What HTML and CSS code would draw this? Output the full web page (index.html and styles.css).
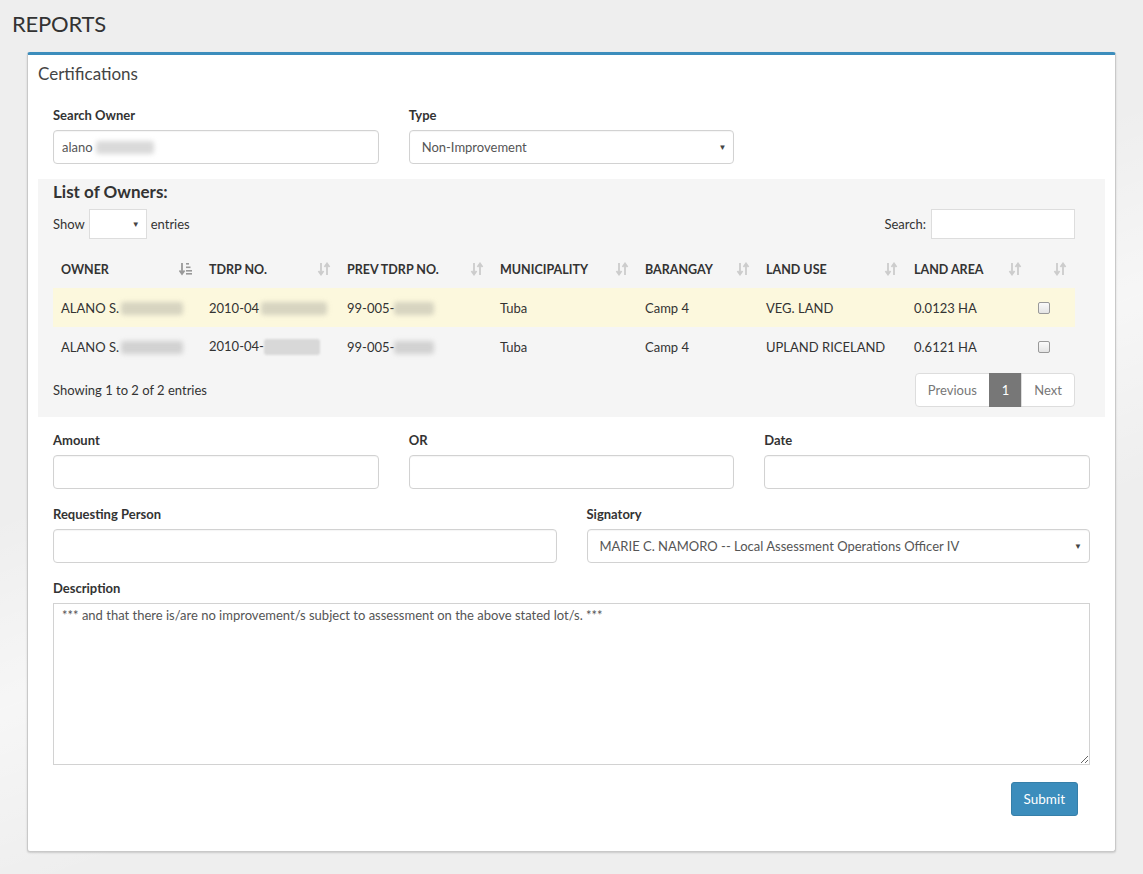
FILE: index.html
```html
<!DOCTYPE html>
<html>
<head>
<meta charset="utf-8">
<link rel="stylesheet" href="styles.css">
</head>
<body>
<div class="page">
  <h1 class="page-title">REPORTS</h1>
  <div class="box">
    <div class="box-header"><h3 class="box-title">Certifications</h3></div>
    <div class="box-body">
      <div class="row row-3">
        <div class="form-group">
          <label class="lbl">Search Owner</label>
          <div class="input input-text">alano <span class="blur blur-w58"></span></div>
        </div>
        <div class="form-group">
          <label class="lbl">Type</label>
          <div class="input select">Non-Improvement<span class="caret">▼</span></div>
        </div>
      </div>

      <div class="panel">
        <h4 class="panel-title">List of Owners:</h4>
        <div class="dt-top">
          <div class="dt-length">Show <span class="len-select"><span class="caret small">▼</span></span> entries</div>
          <div class="dt-search">Search: <span class="search-input"></span></div>
        </div>
        <table class="dt">
          <colgroup>
            <col style="width:148px"><col style="width:138px"><col style="width:153px"><col style="width:145px"><col style="width:121px"><col style="width:148px"><col style="width:124px"><col style="width:45px">
          </colgroup>
          <thead>
            <tr>
              <th>OWNER<svg class="sort active" viewBox="0 0 14 14" width="14" height="14"><path d="M3 1v10M0.5 8.5L3 12l2.5-3.5" stroke="#999" stroke-width="1.8" fill="none"/><rect x="7" y="1" width="3" height="1.6" fill="#999"/><rect x="7" y="4.5" width="4.5" height="1.6" fill="#999"/><rect x="7" y="8" width="6" height="1.6" fill="#999"/><rect x="7" y="11" width="6" height="1.6" fill="#999"/></svg></th>
              <th>TDRP NO.<svg class="sort" viewBox="0 0 14 14" width="14" height="14"><path d="M4 1v11M1.5 9L4 12.5 6.5 9M10 13V2M7.5 5L10 1.5 12.5 5" stroke="#ccc" stroke-width="1.8" fill="none"/></svg></th>
              <th>PREV TDRP NO.<svg class="sort" viewBox="0 0 14 14" width="14" height="14"><path d="M4 1v11M1.5 9L4 12.5 6.5 9M10 13V2M7.5 5L10 1.5 12.5 5" stroke="#ccc" stroke-width="1.8" fill="none"/></svg></th>
              <th>MUNICIPALITY<svg class="sort" viewBox="0 0 14 14" width="14" height="14"><path d="M4 1v11M1.5 9L4 12.5 6.5 9M10 13V2M7.5 5L10 1.5 12.5 5" stroke="#ccc" stroke-width="1.8" fill="none"/></svg></th>
              <th>BARANGAY<svg class="sort" viewBox="0 0 14 14" width="14" height="14"><path d="M4 1v11M1.5 9L4 12.5 6.5 9M10 13V2M7.5 5L10 1.5 12.5 5" stroke="#ccc" stroke-width="1.8" fill="none"/></svg></th>
              <th>LAND USE<svg class="sort" viewBox="0 0 14 14" width="14" height="14"><path d="M4 1v11M1.5 9L4 12.5 6.5 9M10 13V2M7.5 5L10 1.5 12.5 5" stroke="#ccc" stroke-width="1.8" fill="none"/></svg></th>
              <th>LAND AREA<svg class="sort" viewBox="0 0 14 14" width="14" height="14"><path d="M4 1v11M1.5 9L4 12.5 6.5 9M10 13V2M7.5 5L10 1.5 12.5 5" stroke="#ccc" stroke-width="1.8" fill="none"/></svg></th>
              <th><svg class="sort" viewBox="0 0 14 14" width="14" height="14"><path d="M4 1v11M1.5 9L4 12.5 6.5 9M10 13V2M7.5 5L10 1.5 12.5 5" stroke="#ccc" stroke-width="1.8" fill="none"/></svg></th>
            </tr>
          </thead>
          <tbody>
            <tr class="hl">
              <td>ALANO S.<span class="blur blur-w62"></span></td>
              <td>2010-04<span class="blur blur-w70"></span></td>
              <td>99-005-<span class="blur blur-w40"></span></td>
              <td>Tuba</td>
              <td>Camp 4</td>
              <td>VEG. LAND</td>
              <td>0.0123 HA</td>
              <td class="chk"><span class="cb"></span></td>
            </tr>
            <tr>
              <td>ALANO S.<span class="blur blur-w62"></span></td>
              <td>2010-04-<span class="blur blur-w56 solid"></span></td>
              <td>99-005-<span class="blur blur-w40"></span></td>
              <td>Tuba</td>
              <td>Camp 4</td>
              <td>UPLAND RICELAND</td>
              <td>0.6121 HA</td>
              <td class="chk"><span class="cb"></span></td>
            </tr>
          </tbody>
        </table>
        <div class="dt-bottom">
          <div class="dt-info">Showing 1 to 2 of 2 entries</div>
          <ul class="pagination">
            <li class="pg disabled">Previous</li>
            <li class="pg active">1</li>
            <li class="pg disabled">Next</li>
          </ul>
        </div>
      </div>

      <div class="row row-3">
        <div class="form-group">
          <label class="lbl">Amount</label>
          <div class="input"></div>
        </div>
        <div class="form-group">
          <label class="lbl">OR</label>
          <div class="input"></div>
        </div>
        <div class="form-group">
          <label class="lbl">Date</label>
          <div class="input"></div>
        </div>
      </div>

      <div class="row row-2">
        <div class="form-group">
          <label class="lbl">Requesting Person</label>
          <div class="input"></div>
        </div>
        <div class="form-group">
          <label class="lbl">Signatory</label>
          <div class="input select">MARIE C. NAMORO -- Local Assessment Operations Officer IV<span class="caret">▼</span></div>
        </div>
      </div>

      <div class="row row-1">
        <div class="form-group">
          <label class="lbl">Description</label>
          <textarea class="textarea">*** and that there is/are no improvement/s subject to assessment on the above stated lot/s. ***</textarea>
        </div>
      </div>

      <div class="actions">
        <button class="btn-submit">Submit</button>
      </div>
    </div>
  </div>
</div>
</body>
</html>
```

FILE: styles.css
```css
* { box-sizing: border-box; }
html, body { margin: 0; padding: 0; }
body {
  background: #eeeeee;
  background-image:
    linear-gradient(160deg, rgba(255,255,255,0) 40%, rgba(255,255,255,0.5) 55%, rgba(255,255,255,0) 70%);
  font-family: "Lato", "Liberation Sans", sans-serif;
  font-size: 13px;
  color: #333;
  height: 874px;
  overflow: hidden;
}
.page { padding: 0; }
.page-title {
  margin: 0;
  padding: 10px 0 0 12px;
  height: 52px;
  font-size: 22px;
  font-weight: 400;
  line-height: 28px;
  color: #333;
  letter-spacing: -0.2px;
}
.box {
  margin: 0 27px;
  background: #fff;
  border: 1px solid #c9c9c9;
  border-top: 3px solid #3c8dbc;
  border-radius: 3px;
  box-shadow: 0 1px 2px rgba(0,0,0,0.15);
  height: 800px;
}
.box-header { height: 40px; padding: 0 10px; }
.box-title {
  margin: 0;
  font-size: 17px;
  font-weight: 400;
  line-height: 38px;
  color: #444;
}
.box-body { padding: 10px 10px; }
.row {
  display: grid;
  margin: 0;
}
.row-3 { grid-template-columns: repeat(3, 1fr); }
.row-2 { grid-template-columns: repeat(2, 1fr); }
.row-1 { grid-template-columns: 1fr; }
.form-group { padding: 0 15px; margin-bottom: 15px; }
.lbl {
  display: block;
  font-weight: 700;
  font-size: 13px;
  line-height: 20px;
  margin-bottom: 5px;
  color: #333;
}
.input {
  position: relative;
  height: 34px;
  border: 1px solid #d2d2d2;
  border-radius: 4px;
  background: #fff;
  padding: 0 8px;
  line-height: 32px;
  font-size: 13px;
  color: #555;
  box-shadow: inset 0 1px 1px rgba(0,0,0,0.04);
}
.input.select { padding-left: 12px; color: #555; }
.caret {
  position: absolute;
  right: 7px;
  top: 0;
  font-size: 8px;
  color: #444;
  line-height: 32px;
}
.caret.small { right: 6px; line-height: 29px; }
.blur {
  display: inline-block;
  height: 13px;
  vertical-align: -2px;
  background: rgba(120,120,120,0.28);
  filter: blur(2.5px);
  border-radius: 3px;
}
.blur.solid { filter: blur(1px); background: rgba(150,150,150,0.3); height: 16px; vertical-align: -4px; }
.blur-w58 { width: 58px; }
.blur-w62 { width: 62px; margin-left: 2px; }
.blur-w70 { width: 66px; margin-left: 2px; }
.blur-w56 { width: 56px; }
.blur-w40 { width: 40px; }

.panel {
  background: #f5f5f5;
  padding: 1px 30px 10px 15px;
  margin-bottom: 13px;
}
.panel-title {
  margin: 0;
  font-size: 17px;
  font-weight: 700;
  line-height: 24px;
  color: #333;
}
.dt-top {
  display: flex;
  justify-content: space-between;
  align-items: center;
  margin-top: 5px;
  height: 30px;
}
.dt-length { display: flex; align-items: center; gap: 4px; }
.len-select {
  position: relative;
  display: inline-block;
  width: 58px;
  height: 30px;
  background: #fff;
  border: 1px solid #ddd;
}
.dt-search { display: flex; align-items: center; gap: 5px; }
.search-input {
  display: inline-block;
  width: 144px;
  height: 30px;
  background: #fff;
  border: 1px solid #ddd;
}
.dt {
  width: 1022px;
  border-collapse: collapse;
  table-layout: fixed;
  margin-top: 11px;
}
.dt th {
  position: relative;
  text-align: left;
  font-weight: 700;
  font-size: 12.5px;
  height: 38px;
  padding: 0 8px;
  color: #333;
  white-space: nowrap;
}
.dt th .sort {
  position: absolute;
  right: 8px;
  top: 12px;
}
.dt td {
  height: 39px;
  padding: 0 8px;
  font-size: 13px;
  color: #333;
  white-space: nowrap;
  overflow: hidden;
}
.dt tr.hl td { background: #fcf8dd; }
.dt td.chk { padding-left: 8px; }
.cb {
  display: inline-block;
  width: 12px;
  height: 12px;
  border: 1px solid #999;
  border-radius: 2px;
  background: linear-gradient(#fafafa, #e4e4e4);
  vertical-align: -1px;
}
.dt-bottom {
  display: flex;
  justify-content: space-between;
  align-items: center;
  margin-top: 7px;
}
.dt-info { font-size: 13px; }
.pagination {
  display: flex;
  list-style: none;
  margin: 0;
  padding: 0;
}
.pg {
  height: 34px;
  line-height: 32px;
  padding: 0 12px;
  border: 1px solid #ddd;
  margin-left: -1px;
  background: #fff;
  color: #777;
  font-size: 13px;
}
.pg:first-child { border-radius: 4px 0 0 4px; }
.pg:last-child { border-radius: 0 4px 4px 0; }
.pg.active { background: #777; border-color: #777; color: #fff; padding: 0 12px; }
.textarea {
  display: block;
  width: 100%;
  height: 162px;
  border: 1px solid #d2d2d2;
  border-radius: 0;
  padding: 3px 8px;
  font-family: "Lato", "Liberation Sans", sans-serif;
  font-size: 13px;
  color: #555;
  resize: vertical;
}
.actions {
  display: flex;
  justify-content: flex-end;
  padding-right: 27px;
  margin-top: 2px;
}
.btn-submit {
  background: #3c8dbc;
  border: 1px solid #367fa9;
  color: #fff;
  border-radius: 3px;
  height: 34px;
  padding: 0 12px;
  font-family: "Lato", "Liberation Sans", sans-serif;
  font-size: 13.5px;
}
```
